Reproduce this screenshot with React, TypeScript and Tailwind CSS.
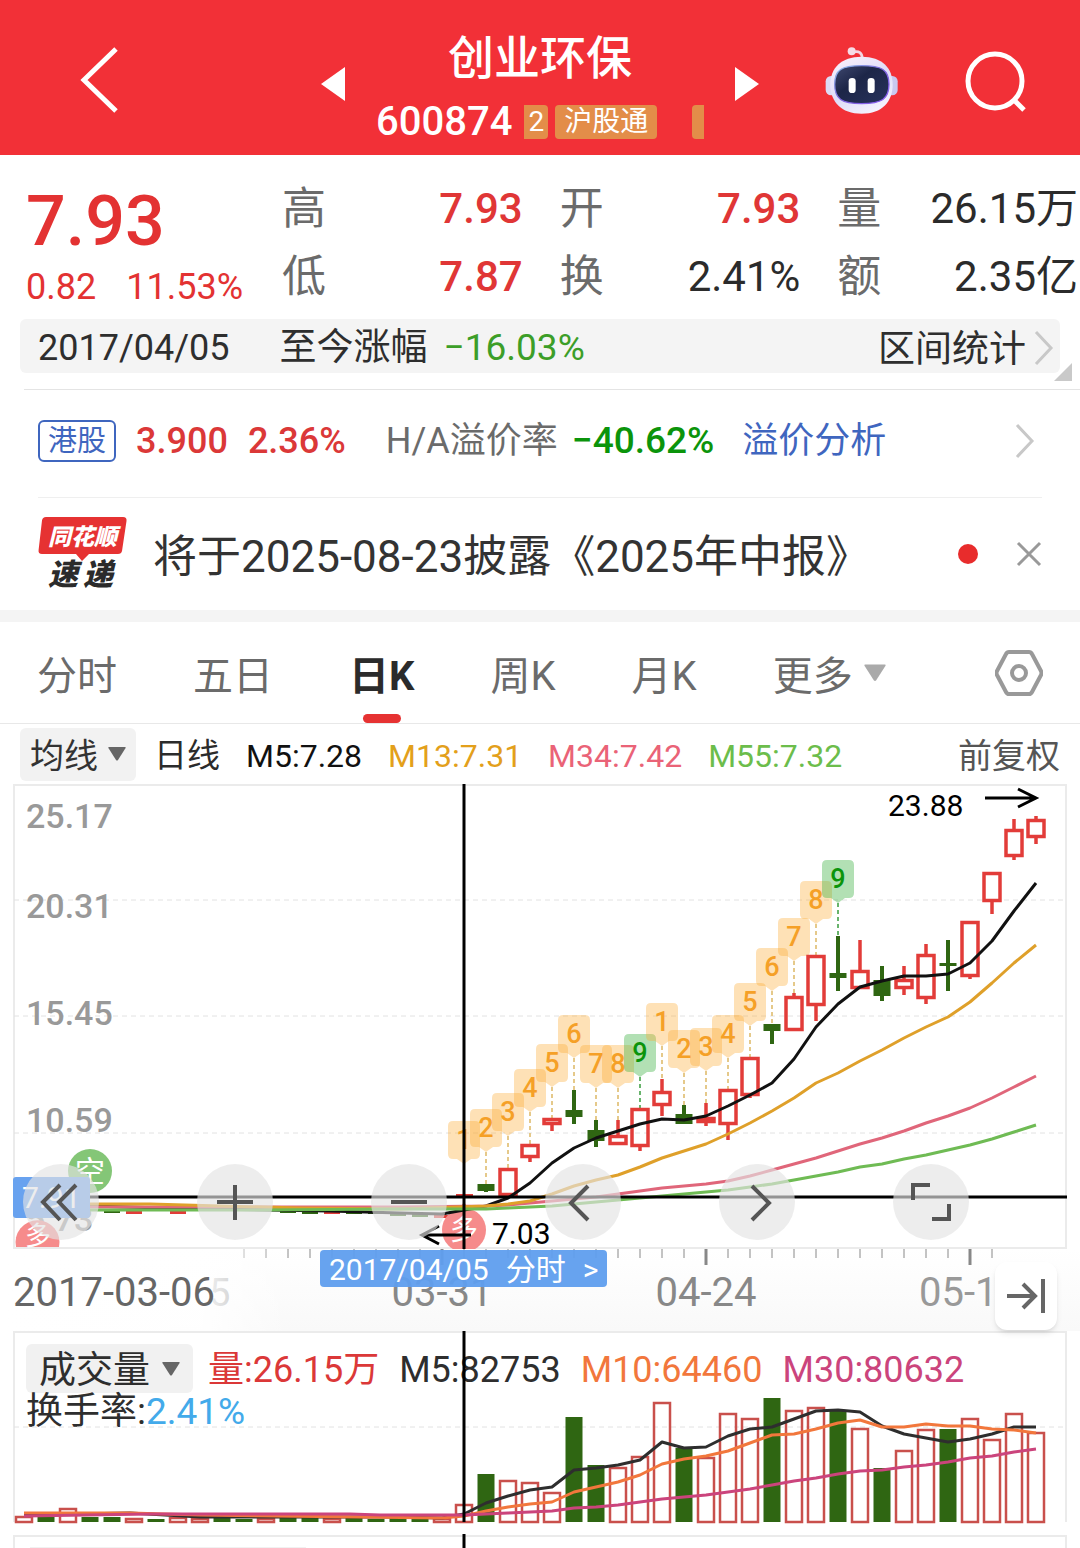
import type { ReactNode } from 'react';
import clsx from 'clsx';

const RED = '#e23c39';
const GREEN = '#2f6612';

// candles are 22 units apart, index 0 sits under the crosshair
const X0 = 464;
const STEP = 22;
const xAt = (i: number) => X0 + i * STEP;

type Candle = { i: number; up: boolean; top: number; bottom: number; high: number; low: number };

const c = (i: number, up: boolean, top: number, bottom: number, high = top, low = bottom): Candle => ({
  i, up, top, bottom, high, low,
});

const candles: Candle[] = [
  c(1, false, 1184, 1191, 1184, 1192),
  c(2, true, 1168, 1196),
  c(3, true, 1144, 1158, 1144, 1162),
  c(4, true, 1118, 1125, 1118, 1131),
  c(5, false, 1110, 1117, 1090, 1124),
  c(6, false, 1130, 1141, 1120, 1147),
  c(7, true, 1135, 1145, 1120, 1145),
  c(8, true, 1108, 1147, 1108, 1151),
  c(9, true, 1091, 1106, 1079, 1116),
  c(10, false, 1114, 1124, 1105, 1124),
  c(11, true, 1117, 1123, 1103, 1126),
  c(12, true, 1089, 1125, 1089, 1140),
  c(13, true, 1057, 1096, 1057, 1098),
  c(14, false, 1024, 1031, 1024, 1044),
  c(15, true, 996, 1031, 993, 1031),
  c(16, true, 955, 1006, 955, 1021),
  c(17, false, 973, 978, 936, 991),
  c(18, true, 970, 989, 940, 989),
  c(19, false, 980, 996, 966, 1001),
  c(20, true, 979, 989, 966, 995),
  c(21, true, 954, 999, 944, 1004),
  c(22, false, 963, 966, 940, 991),
  c(23, true, 921, 977, 921, 979),
  c(24, true, 872, 902, 872, 914),
  c(25, true, 829, 857, 819, 860),
  c(26, true, 819, 838, 816, 844),
];

// flat stretch before the breakout: [index, up, y]
const flat: [number, boolean, number][] = [
  [-16, false, 1211], [-15, true, 1212], [-13, true, 1212], [-8, false, 1211], [-7, false, 1212],
  [-6, true, 1212], [-5, false, 1212], [-4, false, 1212], [-3, false, 1214], [-2, false, 1215], [-1, true, 1216],
];

// tops of the countdown flags, from index 0
const flags = [1121, 1109, 1093, 1069, 1044, 1015, 1045, 1045, 1034, 1003, 1030, 1028, 1015, 983, 948, 918, 881, 860];

const ma5 = [1206, 1198, 1183, 1163, 1148, 1138, 1131, 1124, 1119, 1120, 1116, 1106, 1095, 1083, 1059, 1027, 1004, 987, 981, 976, 976, 974, 963, 941, 911, 883];
const ma13 = [1206, 1204, 1201, 1194, 1186, 1180, 1175, 1167, 1158, 1151, 1144, 1134, 1123, 1111, 1098, 1083, 1073, 1061, 1050, 1038, 1027, 1017, 1002, 983, 963, 945];
const ma34 = [1206, 1205, 1203, 1201, 1199, 1197, 1194, 1191, 1188, 1186, 1184, 1181, 1176, 1170, 1164, 1158, 1151, 1144, 1138, 1131, 1123, 1116, 1108, 1098, 1087, 1076];
const ma55 = [1209, 1208, 1207, 1206, 1204, 1202, 1200, 1198, 1196, 1194, 1192, 1190, 1187, 1184, 1180, 1176, 1172, 1167, 1164, 1159, 1155, 1150, 1145, 1139, 1132, 1125];

const volumes: [boolean, number][] = [
  [true, 1516], [false, 1517], [true, 1508], [false, 1517], [false, 1517], [true, 1518], [false, 1519],
  [true, 1517], [true, 1518], [false, 1517], [false, 1519], [true, 1518], [false, 1518], [false, 1518],
  [true, 1518], [false, 1518], [false, 1519], [false, 1518], [false, 1519], [true, 1518], [true, 1504],
  [false, 1474], [true, 1480], [true, 1482], [true, 1492], [false, 1417], [false, 1465], [true, 1467],
  [true, 1456], [true, 1402], [false, 1448], [true, 1457], [true, 1413], [true, 1418], [false, 1398],
  [true, 1410], [true, 1407], [false, 1410], [true, 1428], [false, 1468], [true, 1450], [true, 1429],
  [false, 1429], [true, 1418], [true, 1439], [true, 1413], [true, 1432],
];
const vol5 = [1514, 1503, 1496, 1490, 1487, 1470, 1468, 1465, 1460, 1442, 1448, 1447, 1436, 1429, 1427, 1419, 1411, 1410, 1412, 1426, 1434, 1438, 1442, 1439, 1434, 1427, 1427];
const vol10 = [1516, 1511, 1507, 1504, 1502, 1492, 1487, 1482, 1475, 1464, 1459, 1456, 1451, 1443, 1435, 1434, 1429, 1423, 1420, 1427, 1427, 1424, 1426, 1426, 1429, 1430, 1433];
const vol30 = [1515, 1514, 1513, 1512, 1511, 1508, 1507, 1505, 1502, 1499, 1497, 1495, 1492, 1489, 1485, 1481, 1478, 1474, 1471, 1470, 1467, 1465, 1462, 1458, 1456, 1452, 1449];

const points = (ys: number[], from: number) => ys.map((y, k) => `${xAt(from + k)},${y}`).join(' ');

const quotes = [
  { label: '高', value: '7.93', up: true },
  { label: '开', value: '7.93', up: true },
  { label: '量', value: '26.15万' },
  { label: '低', value: '7.87', up: true },
  { label: '换', value: '2.41%' },
  { label: '额', value: '2.35亿' },
];

const tabs = ['分时', '五日', '日K', '周K', '月K'];

function Chevron({ className }: { className?: string }) {
  return (
    <svg viewBox="0 0 20 36" className={className} fill="none" stroke="currentColor" strokeWidth="3">
      <path d="M2 2l15 16L2 34" />
    </svg>
  );
}

function Caret({ className }: { className?: string }) {
  return (
    <svg viewBox="0 0 18 14" className={className} fill="currentColor">
      <path d="M1 0h16q1 0 .6 1L10 13q-1 1.200-2 0L.4 1Q0 0 1 0z" />
    </svg>
  );
}

function Robot() {
  return (
    <svg viewBox="70 45 225 210" className="h-[70px] w-[75px]">
      <defs>
        <linearGradient id="shell" x1="0" y1="0" x2="0.6" y2="1">
          <stop offset="0" stopColor="#fdf3fb" />
          <stop offset="0.6" stopColor="#dedcf8" />
          <stop offset="1" stopColor="#f3f1fd" />
        </linearGradient>
        <linearGradient id="visor" x1="0" y1="0" x2="1" y2="1">
          <stop offset="0" stopColor="#3f486f" />
          <stop offset="0.4" stopColor="#1d2648" />
          <stop offset="1" stopColor="#27325c" />
        </linearGradient>
        <linearGradient id="rim" x1="0" y1="0" x2="1" y2="1">
          <stop offset="0" stopColor="#8fc3e8" />
          <stop offset="0.5" stopColor="#7c62dd" />
          <stop offset="1" stopColor="#8a5cf0" />
        </linearGradient>
      </defs>
      <path d="M158 66q26-6 27 20" fill="none" stroke="#f3d5e2" strokeWidth="8" />
      <circle cx="153" cy="64" r="12" fill="#f6dbe6" />
      <rect x="75" y="138" width="34" height="58" rx="16" fill="#dcdaf5" />
      <rect x="257" y="138" width="34" height="58" rx="16" fill="#c9c8f0" />
      <path d="M183 80c62 0 93 34 93 84s-31 87-93 87-94-37-94-87 32-84 94-84z" fill="url(#shell)" />
      <path
        d="M183 107c60 0 82 12 82 56s-22 58-82 58-81-14-81-58 21-56 81-56z"
        fill="url(#visor)"
        stroke="url(#rim)"
        strokeWidth="4"
      />
      <rect x="144" y="144" width="21" height="45" rx="10" fill="#fff" />
      <rect x="201" y="144" width="21" height="45" rx="10" fill="#fff" />
    </svg>
  );
}

function Header() {
  return (
    <header className="grid h-[155px] grid-cols-[1fr_auto_1fr] items-center bg-[#f23037] pt-1 text-white">
      <button aria-label="返回" className="ml-20 w-10">
        <svg viewBox="0 0 40 66" className="h-[66px] w-10" fill="none" stroke="currentColor" strokeWidth="5">
          <path d="M36 2 4 33l32 31" />
        </svg>
      </button>
      <div className="flex items-center gap-[31px] pt-2">
        <button aria-label="上一只">
          <svg viewBox="0 0 24 34" className="h-[34px] w-6" fill="currentColor"><path d="M24 0v34L0 17z" /></svg>
        </button>
        <div className="flex w-[328px] flex-col items-center pt-3">
          <h1 className="text-[46px] leading-[64px] font-medium">创业环保</h1>
          <div className="flex h-16 w-full items-center gap-3">
            <span className="text-[40px] font-medium">600874</span>
            <div className="flex flex-1 items-center gap-[7px] overflow-hidden text-[28px] leading-[34px]">
              <span className="rounded-r bg-[#e38d49] px-1">2</span>
              <span className="rounded bg-[#e38d49] px-[9px] whitespace-nowrap">沪股通</span>
              <span className="ml-auto h-[34px] w-3 rounded-l bg-[#e38d49]" />
            </div>
          </div>
        </div>
        <button aria-label="下一只">
          <svg viewBox="0 0 24 34" className="h-[34px] w-6" fill="currentColor"><path d="M0 0v34l24-17z" /></svg>
        </button>
      </div>
      <div className="flex items-center justify-end gap-[66px] pr-[53px]">
        <button aria-label="智能助手"><Robot /></button>
        <button aria-label="搜索">
          <svg viewBox="0 0 62 62" className="mt-1 h-[62px] w-[62px]" fill="none" stroke="currentColor" strokeWidth="5">
            <circle cx="30" cy="30" r="27" />
            <path d="M48 48l11 11" />
          </svg>
        </button>
      </div>
    </header>
  );
}

function Quote() {
  return (
    <section>
      <div className="flex gap-[37px] pt-5 pr-[2px] pl-[26px]">
        <div className="w-[219px] shrink-0 text-[#e33232]">
          <div className="text-[70px] leading-[92px] font-medium">7.93</div>
          <div className="flex gap-[30px] text-[36px] leading-10">
            <span>0.82</span>
            <span>11.53%</span>
          </div>
        </div>
        <dl className="grid flex-1 grid-cols-3 gap-x-[37px] leading-[68px]">
          {quotes.map((q) => (
            <div key={q.label} className="flex justify-between whitespace-nowrap">
              <dt className="text-[44px] text-[#6b6b6b]">{q.label}</dt>
              <dd className={clsx('text-[42px]', q.up ? 'font-medium text-[#e03636]' : 'text-[#2b2b2b]')}>{q.value}</dd>
            </div>
          ))}
        </dl>
      </div>
      <div className="relative mx-5 mt-2 flex h-[54px] items-center rounded-md bg-[#f4f4f4] pt-1 pl-[18px] text-[36px] text-[#2e2e2e]">
        <span>2017/04/05</span>
        <span className="ml-[50px] text-[37px]">至今涨幅</span>
        <span className="ml-4 text-[37px] text-[#3c9e28]">−16.03%</span>
        <button className="ml-auto flex items-center gap-2 pr-[6px] text-[37px]">
          <span className="pt-1">区间统计</span>
          <Chevron className="h-9 w-5 text-[#c8c8c8]" />
        </button>
        <svg viewBox="0 0 18 18" className="absolute -right-3 -bottom-2 h-[18px] w-[18px]"><path d="M18 0v18H0z" fill="#c9c9c9" /></svg>
      </div>
    </section>
  );
}

function HkRow() {
  return (
    <section className="mt-4 ml-6 flex h-[108px] items-center border-t border-[#e4e4e4] pr-[45px] pb-[6px] pl-[14px] text-[36px] whitespace-nowrap">
      <span className="rounded-md border-2 border-[#3f66bf] px-2 text-[29px] leading-[38px] text-[#3f66bf]">港股</span>
      <span className="ml-5 font-medium text-[#db3838]">3.900</span>
      <span className="ml-5 font-medium text-[#db3838]">2.36%</span>
      <span className="ml-10 text-[#6b6b6b]">H/A溢价率</span>
      <span className="ml-[14px] text-[37px] font-medium text-[#0b940b]">−40.62%</span>
      <a href="#premium" className="ml-7 text-[#3f66bf]">溢价分析</a>
      <Chevron className="ml-auto h-9 w-5 text-[#c8c8c8]" />
    </section>
  );
}

function NewsRow() {
  return (
    <section className="mx-[38px] flex h-[113px] items-center border-t border-[#efefef]">
      <svg viewBox="0 0 90 76" className="h-[76px] w-[90px] shrink-0 overflow-visible">
        <path d="M8 1h77q4 0 3.500 4l-4.500 30q-.6 3-4 3H51l-7 7-6-7H4q-4 0-3.400-4L4 4.500Q4.500 1 8 1z" fill="#e63232" />
        <text x="10" y="29" fontSize="23" fontWeight="900" fontStyle="italic" fill="#fff">同花顺</text>
        <text x="10" y="69" fontSize="30" fontWeight="900" fontStyle="italic" fill="#2b2b2b">速</text>
        <text x="45" y="69" fontSize="30" fontWeight="900" fontStyle="italic" fill="#2b2b2b">递</text>
      </svg>
      <a href="#report" className="ml-[25px] pt-[6px] text-[44px] whitespace-nowrap text-[#333]">将于2025-08-23披露《2025年中报》</a>
      <span className="ml-auto h-5 w-5 rounded-full bg-[#e82c2c]" />
      <button aria-label="关闭" className="ml-[38px]">
        <svg viewBox="0 0 26 26" className="h-[26px] w-[26px]" fill="none" stroke="#999" strokeWidth="3"><path d="M2 2l22 22M24 2 2 24" /></svg>
      </button>
    </section>
  );
}

function Tabs() {
  return (
    <nav className="flex h-[102px] items-center gap-[76px] border-t border-b border-t-transparent border-b-[#e8e8e8] px-[37px] text-[40px] whitespace-nowrap text-[#6b6b6b]">
      {tabs.map((t) => (
        <button key={t} className={clsx('relative h-full pt-2', t === '日K' && 'font-bold text-[#2b2b2b]')}>
          {t}
          {t === '日K' && <span className="absolute bottom-0 left-1/2 h-[9px] w-[38px] -translate-x-1/2 rounded-full bg-[#e63232]" />}
        </button>
      ))}
      <button className="flex items-center gap-[11px] pt-2">
        更多
        <Caret className="mb-2 h-[18px] w-[22px] text-[#aaa]" />
      </button>
      <button aria-label="设置" className="ml-auto">
        <svg viewBox="0 0 48 48" className="h-12 w-12" fill="none" stroke="#999" strokeWidth="4" strokeLinejoin="round">
          <path d="M14 3h20q2 0 3 2l9 17q1 2 0 4l-9 17q-1 2-3 2H14q-2 0-3-2L2 26q-1-2 0-4l9-17q1-2 3-2z" />
          <circle cx="24" cy="24" r="7" />
        </svg>
      </button>
    </nav>
  );
}

function Legend() {
  return (
    <div className="flex h-[60px] items-center gap-[26px] px-5 pt-1 text-[32px] whitespace-nowrap">
      <button className="-mr-2 mb-1 flex h-[53px] items-center gap-[10px] rounded-md bg-[#f2f2f2] px-[10px] text-[34px] text-[#333]">
        <span className="pt-1">均线</span>
        <Caret className="h-[14px] w-[18px] text-[#666]" />
      </button>
      <span className="text-[33px] text-[#2b2b2b]">日线</span>
      <span className="text-[#111]">M5:7.28</span>
      <span className="text-[#e3a01b]">M13:7.31</span>
      <span className="text-[#ea6377]">M34:7.42</span>
      <span className="text-[#6cbd4b]">M55:7.32</span>
      <button className="ml-auto text-[34px] text-[#555]">前复权</button>
    </div>
  );
}

function Flag({ k, top }: { k: number; top: number }) {
  const x = xAt(k);
  const n = (k % 9) + 1;
  const last = n === 9;
  const high = candles.find((d) => d.i === k)?.high ?? top + 42;
  return (
    <g>
      <path d={`M${x} ${top + 43}V${high}`} stroke={last ? '#68b46c' : '#e5c98a'} strokeWidth="2" strokeDasharray="4 3" />
      <path
        d={`M${x - 11} ${top}h22q5 0 5 5v28q0 5-5 5h-4l-7 5l-7-5h-4q-5 0-5-5v-28q0-5 5-5z`}
        fill={last ? '#3fb244' : '#fda92e'}
        fillOpacity={last ? 0.4 : 0.35}
      />
      <text x={x} y={top + 28} fontSize="27" fontWeight="500" textAnchor="middle" fill={last ? '#0b940b' : '#f5a027'}>{n}</text>
    </g>
  );
}

function Body({ d }: { d: Candle }) {
  const x = xAt(d.i);
  if (!d.up) {
    return (
      <g fill={GREEN}>
        <rect x={x - 8.5} y={d.top} width="17" height={d.bottom - d.top} />
        <rect x={x - 2} y={d.high} width="4" height={d.low - d.high} />
      </g>
    );
  }
  return (
    <g stroke={RED} strokeWidth="3.500" fill="none">
      <path d={`M${x} ${d.high}V${d.top}M${x} ${d.bottom}V${d.low}`} />
      <rect x={x - 8} y={d.top + 1.5} width="16" height={d.bottom - d.top - 3} />
    </g>
  );
}

function RoundButton({ label, children }: { label: string; children: ReactNode }) {
  return (
    <button aria-label={label} className="h-[76px] w-[76px] rounded-full bg-[#e3e3e3]/65 text-[#555]">
      <svg viewBox="0 0 76 76" className="h-full w-full" fill="none" stroke="currentColor" strokeWidth="4">{children}</svg>
    </button>
  );
}

function PriceChart() {
  return (
    <section className="relative">
      <svg viewBox="0 784 1080 465" className="block w-full">
        <rect x="14" y="785" width="1052" height="463" fill="none" stroke="#ebebeb" strokeWidth="2" />
        {[900, 1016, 1133].map((y) => (
          <path key={y} d={`M14 ${y}H1066`} stroke="#e2e2e2" strokeDasharray="5 4" />
        ))}
        <g fontSize="34" fill="#999" fontWeight="500">
          <text x="26" y="828">25.17</text>
          <text x="26" y="918">20.31</text>
          <text x="26" y="1025">15.45</text>
          <text x="26" y="1132">10.59</text>
          <text x="26" y="1231">5.73</text>
        </g>

        {flags.map((top, k) => <Flag key={k} k={k} top={top} />)}
        {flat.map(([i, up, y]) => (
          <rect key={i} x={xAt(i) - 8} y={y - 1} width="16" height="3" fill={up ? RED : GREEN} />
        ))}
        <rect x="456" y="1194" width="17" height="2" fill={RED} />
        {candles.map((d) => <Body key={d.i} d={d} />)}

        <circle cx="90" cy="1171" r="22" fill="#84c677" />
        <text x="90" y="1182" fontSize="30" textAnchor="middle" fill="#fff">空</text>
        <path d="M16 1247a22 22 0 1 1 43 0z" fill="#f68b8b" />
        <text x="38" y="1245" fontSize="26" textAnchor="middle" fill="#fff">多</text>
        <path d="M464 1202l5 7h-10z" fill="#f68b8b" />
        <circle cx="464" cy="1230" r="22" fill="#f68b8b" />
        <text x="464" y="1240" fontSize="28" textAnchor="middle" fill="#fff">多</text>

        <g fill="none" strokeWidth="3" strokeLinejoin="round">
          <polyline points={`24,1206 90,1206 200,1209 330,1211 400,1213 442,1214 ${points(ma5, 1)}`} stroke="#111" />
          <polyline points={`24,1207 200,1207 400,1207 ${points(ma34, 1)}`} stroke="#e0667a" />
          <polyline points={`24,1204 150,1204 220,1206 300,1208 400,1209 ${points(ma13, 1)}`} stroke="#dfa02a" />
          <polyline points={`24,1210 260,1210 400,1209 ${points(ma55, 1)}`} stroke="#6fbb54" />
        </g>

        <g fill="none" stroke="#000" strokeWidth="3">
          <path d="M985 798h50M1018 789l18 9-18 9" />
          <path d="M471 1235h-48M439 1226l-17 9 17 9" />
        </g>
        <text x="888" y="816" fontSize="30">23.88</text>
        <text x="492" y="1244" fontSize="30">7.03</text>
        <path d="M14 1197H1067M464 784V1249" stroke="#000" strokeWidth="3" />
        <rect x="13" y="1177" width="77" height="41" rx="3" fill="#68a2ef" />
        <text x="22" y="1208" fontSize="30" fill="#fff">7.91</text>
      </svg>

      {/* chart controls float over the lower edge of the plot */}
      <div className="absolute bottom-[9px] left-[23px] flex gap-[98px]">
        <RoundButton label="快速后退"><path d="M37 21 20 38l17 18M53 21 36 38l17 18" /></RoundButton>
        <RoundButton label="放大"><path d="M38 21v35M20 38h36" /></RoundButton>
        <RoundButton label="缩小"><path d="M20 38h36" /></RoundButton>
        <RoundButton label="向左"><path d="M43 22 26 39l17 17" /></RoundButton>
        <RoundButton label="向右"><path d="M33 22l17 17-17 17" /></RoundButton>
        <RoundButton label="全屏"><path d="M20 36V21h17M56 40v15H39" /></RoundButton>
      </div>
    </section>
  );
}

const ticks = Array.from({ length: 35 }, (_, k) => xAt(k - 10));

function TimeAxis() {
  return (
    <section className="relative bg-linear-to-b from-white to-[#f9f9f9]">
      <svg viewBox="0 1249 1080 82" className="block w-full">
        <defs>
          <linearGradient id="fade">
            <stop offset="0" stopColor="#fff" />
            <stop offset="0.7" stopColor="#fff" stopOpacity="0.900" />
            <stop offset="1" stopColor="#fff" stopOpacity="0" />
          </linearGradient>
        </defs>
        {ticks.map((x) => {
          const major = (x - 442) % 264 === 0;
          return <path key={x} d={`M${x} 1249v${major ? 16 : 9}`} stroke="#888" strokeWidth={major ? 3 : 1} />;
        })}
        <text x="209" y="1306" fontSize="38" fill="#999">5</text>
        <rect x="0" y="1249" width="290" height="82" fill="url(#fade)" />
        <g fontSize="40" fill="#666">
          <text x="13" y="1306">2017-03-06</text>
          <text x="442" y="1306" textAnchor="middle" fill="#888">03-31</text>
          <text x="706" y="1306" textAnchor="middle" fill="#888">04-24</text>
          <text x="919" y="1306" fill="#999">05-1</text>
        </g>
      </svg>
      <button className="absolute top-px left-[320px] flex h-[37px] items-center gap-[17px] rounded-sm bg-[#5f9eee]/95 px-[9px] pt-[2px] text-[30px] whitespace-nowrap text-white">
        <span>2017/04/05</span>
        <span>分时</span>
        <span>&gt;</span>
      </button>
      <button aria-label="回到最新" className="absolute top-[13px] right-[23px] h-[68px] w-[62px] rounded-xl bg-white shadow-md">
        <svg viewBox="0 0 62 68" className="h-full w-full" fill="none" stroke="#666" strokeWidth="4">
          <path d="M12 34h27M28 22l12 12-12 12M48 17v34" />
        </svg>
      </button>
    </section>
  );
}

function VolumePanel() {
  return (
    <section className="grid">
      <div className="col-start-1 row-start-1 px-[26px] pt-[13px] text-[36px] whitespace-nowrap text-[#2e2e2e]">
        <div className="flex h-[49px] items-center gap-5 leading-[45px]">
          <button className="-mr-[5px] flex h-[49px] items-center gap-3 rounded-md bg-[#f1f1f1] px-[13px] text-[37px]">
            <span className="pt-1">成交量</span>
            <Caret className="h-[14px] w-[18px] text-[#666]" />
          </button>
          <span className="pt-1 text-[#db3838]">量:26.15万</span>
          <span className="pt-1">M5:82753</span>
          <span className="pt-1 text-[#f2773c]">M10:64460</span>
          <span className="pt-1 text-[#cb447c]">M30:80632</span>
        </div>
        <div className="text-[37px] leading-[38px]">换手率:<span className="text-[#43aaea]">2.41%</span></div>
      </div>
      <svg viewBox="0 1331 1080 217" className="pointer-events-none col-start-1 row-start-1 block w-full">
        <path d="M14 1522V1332H1066V1522M14 1548V1536H1066V1548" fill="none" stroke="#ebebeb" strokeWidth="2" />
        <path d="M14 1427H1066" stroke="#e2e2e2" strokeDasharray="5 4" />
        {volumes.map(([up, top], k) => {
          const x = xAt(k - 20);
          return up ? (
            <rect key={k} x={x - 8} y={top + 1} width="16" height={1521 - top} fill="none" stroke="#c9504c" strokeWidth="2.500" />
          ) : (
            <rect key={k} x={x - 8.5} y={top} width="17" height={1522 - top} fill={GREEN} />
          );
        })}
        <g fill="none" strokeWidth="3" strokeLinejoin="round">
          <polyline points={`24,1515 130,1513 200,1517 400,1517 442,1518 ${points(vol5, 0)}`} stroke="#2e2e2e" />
          <polyline points={`24,1513 130,1513 200,1515 360,1517 442,1518 ${points(vol10, 0)}`} stroke="#f2773c" />
          <polyline points={`24,1516 150,1514 350,1514 380,1515 ${points(vol30, 0)}`} stroke="#cb447c" />
        </g>
        <path d="M464 1331V1522M464 1534V1548" stroke="#000" strokeWidth="3" />
        <path d="M30 1547.500H306" stroke="#f1f1f1" />
      </svg>
    </section>
  );
}

export default function App() {
  return (
    <main className="overflow-hidden bg-white font-[Roboto,'Noto_Sans_CJK_SC',sans-serif]">
      <Header />
      <Quote />
      <HkRow />
      <NewsRow />
      <div className="h-3 bg-[#f4f4f4]" />
      <Tabs />
      <Legend />
      <PriceChart />
      <TimeAxis />
      <VolumePanel />
    </main>
  );
}
